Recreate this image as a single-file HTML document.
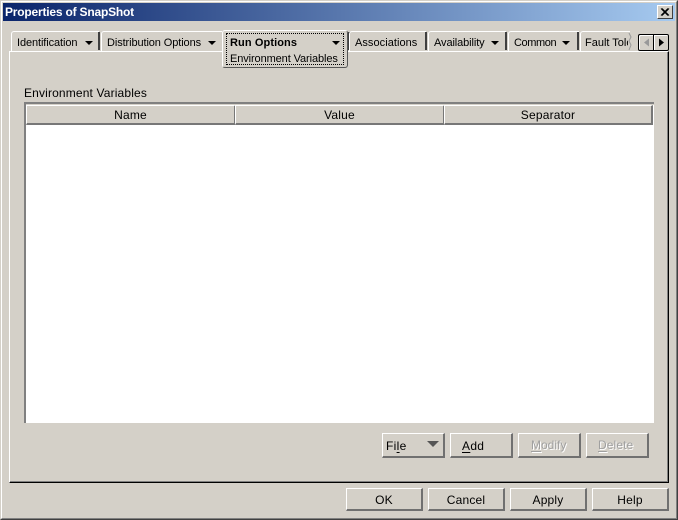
<!DOCTYPE html>
<html><head><meta charset="utf-8"><style>
html,body{margin:0;padding:0;background:#d4d0c8}
body{width:678px;height:520px;position:relative;overflow:hidden;font:11px "Liberation Sans",sans-serif;color:#000}
div,span.a{position:absolute;box-sizing:border-box}
.t{white-space:nowrap;line-height:14px}
.l{font-size:12px;letter-spacing:.15px}
.btn{background:#d4d0c8;border-top:1px solid #fff;border-left:1px solid #fff;border-right:2px solid #707070;border-bottom:2px solid #707070;text-align:center;font-size:12px;letter-spacing:.2px}
.tab{height:20px;top:31px;border-top:1px solid #fff;border-left:1px solid #fff;border-top-left-radius:3px;background:#d4d0c8}
.sep{top:32px;width:2px;height:18px;background:#404040}
.arr{width:0;height:0;border-left:4px solid transparent;border-right:4px solid transparent;border-top:4px solid #000}
.hd{top:105px;height:20px;background:#d4d0c8;border-top:1px solid #fff;border-left:1px solid #fff;border-right:2px solid #777;border-bottom:2px solid #777;text-align:center;line-height:18px;font-size:12px;letter-spacing:.2px}
.dis{color:#a0a0a0;text-shadow:1px 1px 0 #fff}
u{text-underline-offset:2px}
</style></head><body>
<div style="left:0;top:0;width:678px;height:520px;border-top:1px solid #d4d0c8;border-left:1px solid #d4d0c8;border-right:1px solid #404040;border-bottom:1px solid #404040"></div>
<div style="left:1px;top:1px;width:676px;height:518px;border-top:1px solid #fff;border-left:1px solid #fff;border-right:1px solid #808080;border-bottom:1px solid #808080"></div>
<div style="left:3px;top:3px;width:672px;height:18px;background:linear-gradient(90deg,#0a246a,#a6caf0)"></div>
<div class="t" style="left:5px;top:5px;color:#fff;font-weight:bold;font-size:12px;letter-spacing:-.2px">Properties of SnapShot</div>
<div style="left:657px;top:5px;width:16px;height:14px;background:#d4d0c8;border-top:1px solid #fff;border-left:1px solid #fff;border-right:1px solid #404040;border-bottom:1px solid #404040"></div>
<svg style="position:absolute;left:657px;top:5px" width="16" height="14"><path d="M4 3.5L11 10.5M5 3.5L12 10.5M11 3.5L4 10.5M12 3.5L5 10.5" stroke="#000" stroke-width="1"/></svg>

<div style="left:9px;top:51px;width:660px;height:432px;border-top:1px solid #fff;border-left:1px solid #fff;border-right:1px solid #000;border-bottom:1px solid #000;box-shadow:inset -1px -1px 0 #808080"></div>

<div class="tab" style="left:11px;width:88px"></div><div class="sep" style="left:98px"></div>
<div class="t" style="left:17px;top:36px;letter-spacing:-.1px">Identification</div><div class="arr" style="left:85px;top:41px"></div>

<div class="tab" style="left:101px;width:121px"></div>
<div class="t" style="left:107px;top:36px;letter-spacing:-.1px">Distribution Options</div><div class="arr" style="left:208px;top:41px"></div>

<div style="left:222px;top:30px;width:126px;height:38px;background:#d4d0c8;border-top:1px solid #fff;border-left:1px solid #fff;border-right:1px solid #555;border-bottom:1px solid #555;border-radius:3px"></div>
<div style="left:226px;top:33px;width:118px;height:32px;border:1px dotted #000"></div>
<div class="t" style="left:230px;top:36px;font-weight:bold;letter-spacing:.1px">Run Options</div><div class="arr" style="left:332px;top:41px"></div>
<div class="t" style="left:230px;top:52px;letter-spacing:-.1px">Environment Variables</div>

<div class="sep" style="left:348px"></div>
<div class="tab" style="left:349px;width:77px"></div><div class="sep" style="left:425px"></div>
<div class="t" style="left:355px;top:36px;letter-spacing:.05px">Associations</div>

<div class="tab" style="left:428px;width:78px"></div><div class="sep" style="left:505px"></div>
<div class="t" style="left:434px;top:36px;letter-spacing:-.1px">Availability</div><div class="arr" style="left:491px;top:41px"></div>

<div class="tab" style="left:508px;width:71px"></div><div class="sep" style="left:577px"></div>
<div class="t" style="left:514px;top:36px;letter-spacing:-.4px">Common</div><div class="arr" style="left:562px;top:41px"></div>

<div class="tab" style="left:580px;width:50px;overflow:hidden"></div>
<div class="t" style="left:585px;top:36px;width:43px;overflow:hidden">Fault Tolerance</div>
<svg style="position:absolute;left:626px;top:33px" width="6" height="18"><path d="M3 0L5 4L3 8L5 12L3 17" fill="none" stroke="#999"/></svg>

<div style="left:638px;top:34px;width:16px;height:17px;background:#d4d0c8;border:1px solid #000;border-right:0;border-radius:2px 0 0 2px;box-shadow:inset 1px 1px 0 #fff"></div>
<div style="left:653px;top:34px;width:16px;height:17px;background:#d4d0c8;border:1px solid #000;border-radius:0 2px 2px 0;box-shadow:inset 1px 1px 0 #fff"></div>
<svg style="position:absolute;left:638px;top:34px" width="31" height="17"><path d="M11 4.5V12.5L6 8.5Z" fill="#999"/><path d="M21 4.5V12.5L26 8.5Z" fill="#000"/></svg>

<div class="t l" style="left:24px;top:86px">Environment Variables</div>
<div style="left:24px;top:102px;width:630px;height:321px;background:#fff;border-top:2px solid #808080;border-left:2px solid #808080"></div>
<div style="left:26px;top:104px;width:628px;height:1px;background:#d4d0c8"></div>
<div class="hd" style="left:26px;width:210px">Name</div>
<div class="hd" style="left:235px;width:210px">Value</div>
<div class="hd" style="left:444px;width:209px">Separator</div>

<div class="btn" style="left:382px;top:433px;width:63px;height:25px"></div>
<div class="t l" style="left:386px;top:439px;letter-spacing:.3px">Fi<u>l</u>e</div>
<div class="arr" style="left:427px;top:441px;border-left-width:6px;border-right-width:6px;border-top:6px solid #555"></div>
<div class="btn" style="left:450px;top:433px;width:63px;height:25px"></div>
<div class="t l" style="left:462px;top:439px;letter-spacing:.3px"><u>A</u>dd</div>
<div class="btn" style="left:518px;top:433px;width:63px;height:25px"></div>
<div class="t dis l" style="left:531px;top:438px;letter-spacing:0"><u>M</u>odify</div>
<div class="btn" style="left:586px;top:433px;width:63px;height:25px"></div>
<div class="t dis l" style="left:598px;top:438px;letter-spacing:.1px"><u>D</u>elete</div>

<div class="btn" style="left:346px;top:488px;width:77px;height:23px;line-height:22px">OK</div>
<div class="btn" style="left:428px;top:488px;width:77px;height:23px;line-height:22px">Cancel</div>
<div class="btn" style="left:510px;top:488px;width:77px;height:23px;line-height:22px">Apply</div>
<div class="btn" style="left:592px;top:488px;width:77px;height:23px;line-height:22px">Help</div>
</body></html>
